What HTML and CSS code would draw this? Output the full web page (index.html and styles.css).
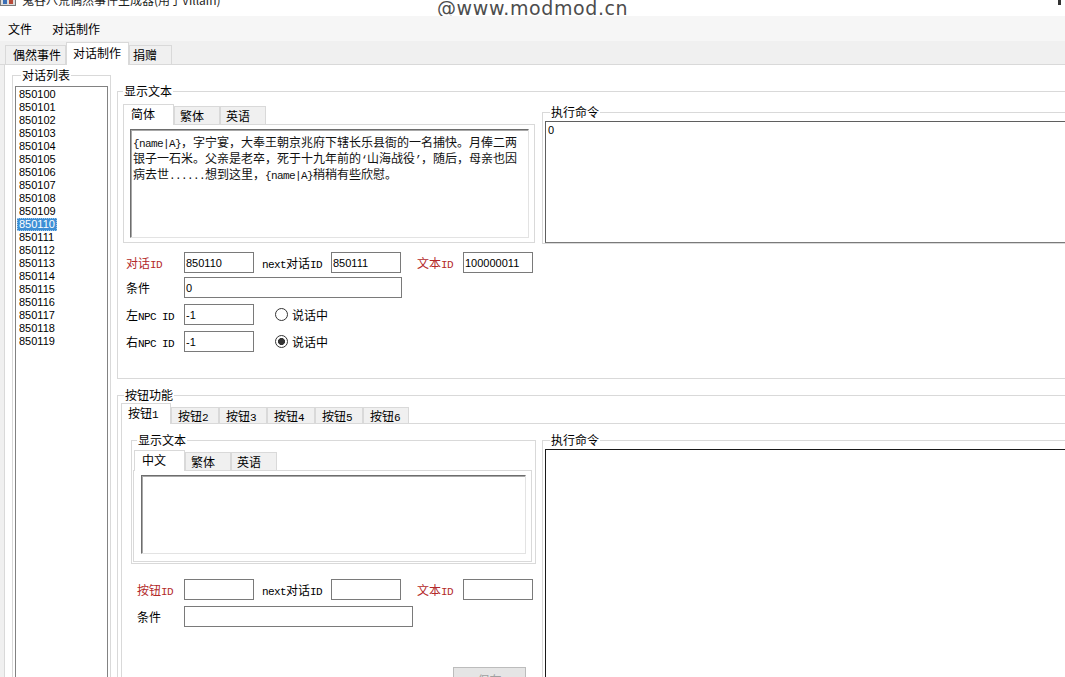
FILE: index.html
```html
<!DOCTYPE html>
<html lang="zh-CN">
<head>
<meta charset="utf-8">
<title>鬼谷八荒偶然事件生成器(用于Villain)</title>
<link rel="stylesheet" href="styles.css">
</head>
<body>
<header class="titlebar">
  <svg class="app-icon" width="16" height="16" viewBox="0 0 16 16" aria-hidden="true">
    <rect x="0.5" y="0.5" width="15" height="15" fill="#dcdcdc" stroke="#7a7a7a"/>
    <rect x="3" y="9" width="4" height="5" fill="#3b6fb6"/>
    <rect x="9" y="9" width="4" height="5" fill="#b84a3a"/>
  </svg>
  <span class="title">鬼谷八荒偶然事件生成器(用于Villain)</span>
  <span class="watermark">@www.modmod.cn</span>
  <span class="corner-mark"></span>
</header>
<nav class="menubar">
  <span class="menu-item">文件</span>
  <span class="menu-item">对话制作</span>
</nav>
<div class="tabstrip">
  <span class="tab tab-first">偶然事件</span>
  <span class="tab tab-active">对话制作</span>
  <span class="tab tab-short">捐赠</span>
</div>
<main class="page">
  <fieldset class="group list-group">
    <legend>对话列表</legend>
    <ul class="listbox">
      <li>850100</li>
      <li>850101</li>
      <li>850102</li>
      <li>850103</li>
      <li>850104</li>
      <li>850105</li>
      <li>850106</li>
      <li>850107</li>
      <li>850108</li>
      <li>850109</li>
      <li><span class="sel">850110</span></li>
      <li>850111</li>
      <li>850112</li>
      <li>850113</li>
      <li>850114</li>
      <li>850115</li>
      <li>850116</li>
      <li>850117</li>
      <li>850118</li>
      <li>850119</li>
    </ul>
  </fieldset>

  <div class="right-col">
    <fieldset class="group text-group">
      <legend>显示文本</legend>
      <div class="top-body">
        <div class="left-sec">
          <div class="subtabs">
            <span class="subtab subtab-active">简体</span>
            <span class="subtab">繁体</span>
            <span class="subtab">英语</span>
          </div>
          <div class="subpanel top-panel">
            <div class="textarea main-text"><span class="m">{name|A}</span>，字宁宴，大奉王朝京兆府下辖长乐县衙的一名捕快。月俸二两<br>银子一石米。父亲是老卒，死于十九年前的<span class="m">‘</span>山海战役<span class="m">’</span>，随后，母亲也因<br>病去世<span class="m">......</span>想到这里，<span class="m">{name|A}</span>稍稍有些欣慰。</div>
          </div>
          <div class="form-row row-first">
            <span class="lbl red">对话<span class="m">ID</span></span>
            <input class="field" type="text" value="850110">
            <span class="lbl lbl-next"><span class="m">next</span>对话<span class="m">ID</span></span>
            <input class="field" type="text" value="850111">
            <span class="lbl lbl-textid red">文本<span class="m">ID</span></span>
            <input class="field" type="text" value="100000011">
          </div>
          <div class="form-row row-tight">
            <span class="lbl">条件</span>
            <input class="field field-cond" type="text" value="0">
          </div>
          <div class="form-row">
            <span class="lbl">左<span class="m">NPC ID</span></span>
            <input class="field" type="text" value="-1">
            <input class="radio" type="radio" name="speaker">
            <span class="radio-text">说话中</span>
          </div>
          <div class="form-row">
            <span class="lbl">右<span class="m">NPC ID</span></span>
            <input class="field" type="text" value="-1">
            <input class="radio" type="radio" name="speaker" checked>
            <span class="radio-text">说话中</span>
          </div>
        </div>
        <fieldset class="group exec">
          <legend>执行命令</legend>
          <div class="exec-box">0</div>
        </fieldset>
      </div>
    </fieldset>

    <fieldset class="group btn-group">
      <legend>按钮功能</legend>
      <div class="btn-body">
        <div class="btabs">
          <span class="btab btab-active">按钮<span class="m">1</span></span>
          <span class="btab">按钮<span class="m">2</span></span>
          <span class="btab">按钮<span class="m">3</span></span>
          <span class="btab">按钮<span class="m">4</span></span>
          <span class="btab">按钮<span class="m">5</span></span>
          <span class="btab btab-last">按钮<span class="m">6</span></span>
        </div>
        <div class="bpanel">
          <div class="left-sec2">
            <fieldset class="group inner-group">
              <legend>显示文本</legend>
              <div class="subtabs subtabs-inner">
                <span class="subtab subtab-active">中文</span>
                <span class="subtab">繁体</span>
                <span class="subtab">英语</span>
              </div>
              <div class="subpanel bottom-panel">
                <div class="textarea sub-text"></div>
              </div>
            </fieldset>
            <div class="form-row form-row2 row-gap">
              <span class="lbl lbl-short red">按钮<span class="m">ID</span></span>
              <input class="field" type="text" value="">
              <span class="lbl lbl-next"><span class="m">next</span>对话<span class="m">ID</span></span>
              <input class="field" type="text" value="">
              <span class="lbl lbl-textid red">文本<span class="m">ID</span></span>
              <input class="field" type="text" value="">
            </div>
            <div class="form-row form-row2">
              <span class="lbl lbl-short">条件</span>
              <input class="field field-cond2" type="text" value="">
            </div>
            <button class="action-btn" type="button">保存</button>
          </div>
          <fieldset class="group exec exec2">
            <legend>执行命令</legend>
            <div class="exec-box exec-box2"></div>
          </fieldset>
        </div>
      </div>
    </fieldset>
  </div>
</main>
</body>
</html>
```

FILE: styles.css
```css
* { box-sizing: border-box; }
html, body { margin: 0; padding: 0; }
body {
  width: 1065px;
  height: 677px;
  overflow: hidden;
  background: #f0f0f0;
  color: #000;
  font-family: "Noto Sans CJK SC", "Noto Sans", sans-serif;
  font-size: 12px;
  line-height: 16px;
}
.m {
  font-family: "Liberation Mono", "DejaVu Sans Mono", monospace;
  font-size: 11px;
  line-height: 1;
  letter-spacing: -0.6px;
}

/* title bar */
.titlebar {
  display: flex;
  align-items: flex-start;
  height: 16px;
  overflow: hidden;
  background: #fff;
}
.app-icon { flex: none; margin: -10px 6px 0 0; }
.title {
  flex: none;
  width: 415px;
  margin-top: -8px;
  white-space: nowrap;
  color: #1e1e1e;
}
.watermark {
  flex: none;
  font-family: "DejaVu Sans", sans-serif;
  font-size: 19px;
  line-height: 16px;
  color: #4d4d4d;
  letter-spacing: 0.6px;
  white-space: nowrap;
}
.corner-mark {
  margin-left: auto;
  margin-right: 4px;
  width: 3px;
  height: 5px;
  background: #333;
}

/* menu */
.menubar {
  display: flex;
  align-items: center;
  gap: 20px;
  height: 25px;
  padding-left: 8px;
  background: #f6f6f6;
}

/* top tabs */
.tabstrip {
  display: flex;
  align-items: flex-end;
  height: 24px;
  padding-left: 5px;
  background: #f0f0f0;
  border-bottom: 1px solid #d9d9d9;
}
.tab {
  flex: none;
  height: 19px;
  padding-left: 7px;
  border: 1px solid #d9d9d9;
  border-bottom: 0;
  background: #f0f0f0;
  line-height: 18px;
  white-space: nowrap;
}
.tab-first { width: 61px; padding-left: 7px; }
.tab-active {
  width: 63px;
  height: 23px;
  margin-bottom: -1px;
  padding-left: 6px;
  background: #fff;
  position: relative;
  z-index: 1;
  line-height: 20px;
}
.tab-short { width: 43px; padding-left: 3px; }

/* page */
.page {
  display: flex;
  align-items: flex-start;
  height: 612px;
  margin-left: 4px;
  border-left: 1px solid #d9d9d9;
  background: #fff;
  overflow: hidden;
}

.group {
  margin: 0;
  padding: 0;
  border: 1px solid #d9d9d9;
  min-width: 0;
}
fieldset.group > legend {
  padding: 0 1px;
  margin-left: 5px;
  line-height: 16px;
}

/* list */
.list-group {
  flex: none;
  width: 99px;
  height: 640px;
  margin: 2px 0 0 7px;
}
fieldset.list-group { padding: 3px 2px 0; }
fieldset.list-group > legend { margin-left: 6px; }
.listbox {
  list-style: none;
  margin: 0;
  padding: 1px 0 0 3px;
  width: 93px;
  height: 600px;
  border: 1px solid #828282;
  font-family: "Liberation Sans", Arial, sans-serif;
  font-size: 11px;
  line-height: 13px;
}
.sel {
  display: inline-block;
  margin-left: -2px;
  padding: 0 2px;
  background: #3d8fd6;
  color: #fff;
  outline: 1px dotted #9cc6ea;
  outline-offset: -1px;
}

/* right column */
.right-col {
  flex: none;
  width: 960px;
  margin-left: 6px;
}
.text-group { margin-top: 18px; }
.top-body {
  display: flex;
  align-items: flex-start;
  padding: 5px 0 26px 5px;
}
.left-sec { flex: none; width: 412px; }

.subtabs {
  display: flex;
  align-items: flex-end;
  height: 20px;
}
.subtab {
  flex: none;
  width: 46px;
  height: 18px;
  padding-left: 5px;
  border: 1px solid #d9d9d9;
  border-bottom: 0;
  background: #f0f0f0;
  line-height: 17px;
}
.subtab-active {
  width: 51px;
  height: 21px;
  margin-bottom: -1px;
  padding-left: 7px;
  background: #fff;
  position: relative;
  z-index: 1;
  line-height: 17px;
}
.subpanel {
  border: 1px solid #d9d9d9;
  background: #fff;
}
.top-panel {
  width: 412px;
  height: 119px;
  padding: 4px 5px 4px 6px;
}
.textarea {
  border: 1px solid;
  border-color: #6d6d6d #e3e3e3 #e3e3e3 #6d6d6d;
  box-shadow: inset 1px 1px 0 #a8a8a8;
  background: #fff;
}
.main-text {
  width: 399px;
  height: 109px;
  padding: 4px 2px;
  font-size: 12px;
  line-height: 15px;
  white-space: nowrap;
  color: #111;
}

.exec {
  flex: none;
  width: 530px;
  margin-left: 7px;
}
fieldset.exec { padding: 1px 0 0 2px; }
.exec-box {
  height: 122px;
  padding: 2px 2px;
  border: 1px solid #7a7a7a;
  border-top-color: #5f5f5f;
  border-left-color: #5f5f5f;
  background: #fff;
  font-family: "Liberation Sans", Arial, sans-serif;
  font-size: 11px;
  line-height: 13px;
}

/* form rows */
.form-row {
  display: flex;
  align-items: center;
  height: 21px;
  margin-top: 6px;
  padding-left: 3px;
}
.row-first { margin-top: 9px; }
.row-tight { margin-top: 4px; }
.lbl {
  flex: none;
  width: 58px;
  white-space: nowrap;
}
.red { color: #b32a2a; }
.lbl-next { width: 69px; margin-left: 8px; }
.lbl-textid { width: 46px; margin-left: 16px; }
.field {
  flex: none;
  width: 70px;
  height: 21px;
  margin: 0;
  padding: 0 1px;
  border: 1px solid #7a7a7a;
  background: #fff;
  color: #000;
  font-family: "Liberation Sans", Arial, sans-serif;
  font-size: 11px;
  outline: none;
}
.field-cond { width: 218px; }
.field-cond2 { width: 229px; }
.radio {
  appearance: none;
  -webkit-appearance: none;
  flex: none;
  width: 13px;
  height: 13px;
  margin: 0 0 0 21px;
  border: 1px solid #333;
  border-radius: 50%;
  background: #fff;
}
.radio:checked {
  background: radial-gradient(circle, #333 0 3.2px, #fff 3.8px);
}
.radio-text { margin-left: 4px; }

/* button section */
.btn-group { margin-top: 8px; }
fieldset.btn-group > legend { margin-left: 6px; }
.btn-body { padding-left: 3px; }
.btabs {
  display: flex;
  align-items: flex-end;
  height: 20px;
}
.btab {
  flex: none;
  width: 48px;
  height: 16px;
  padding-left: 6px;
  border: 1px solid #d9d9d9;
  border-bottom: 0;
  background: #f0f0f0;
  line-height: 15px;
  white-space: nowrap;
}
.btab-active {
  width: 50px;
  height: 21px;
  margin-bottom: -1px;
  padding-left: 6px;
  background: #fff;
  position: relative;
  z-index: 1;
  line-height: 18px;
}
.btab-last { width: 46px; }
.bpanel {
  display: flex;
  align-items: flex-start;
  height: 300px;
  padding: 8px 0 0 9px;
  border: 1px solid #d9d9d9;
  border-right: 0;
  background: #fff;
}
.left-sec2 { flex: none; width: 405px; }
.inner-group { width: 405px; }
fieldset.inner-group { padding: 2px 3px 1px 1px; }
fieldset.inner-group > legend { margin-left: 4px; }
.subtabs-inner { margin-left: 1px; }
.bottom-panel {
  width: 399px;
  height: 92px;
  padding: 4px 5px 7px 7px;
}
.sub-text { width: 385px; height: 79px; }

.form-row2 { padding-left: 6px; }
.row-gap { margin-top: 15px; }
.lbl-short { width: 47px; }
.action-btn {
  display: block;
  width: 73px;
  height: 24px;
  margin: 40px 0 0 322px;
  padding: 0;
  border: 1px solid #bcbcbc;
  background: #e5e5e5;
  color: #a0a0a0;
  font-family: "Noto Sans CJK SC", sans-serif;
  font-size: 12px;
}
.exec2 { margin-left: 6px; }
.exec-box2 {
  height: 260px;
  border: 1px solid #1a1a1a;
}
```
